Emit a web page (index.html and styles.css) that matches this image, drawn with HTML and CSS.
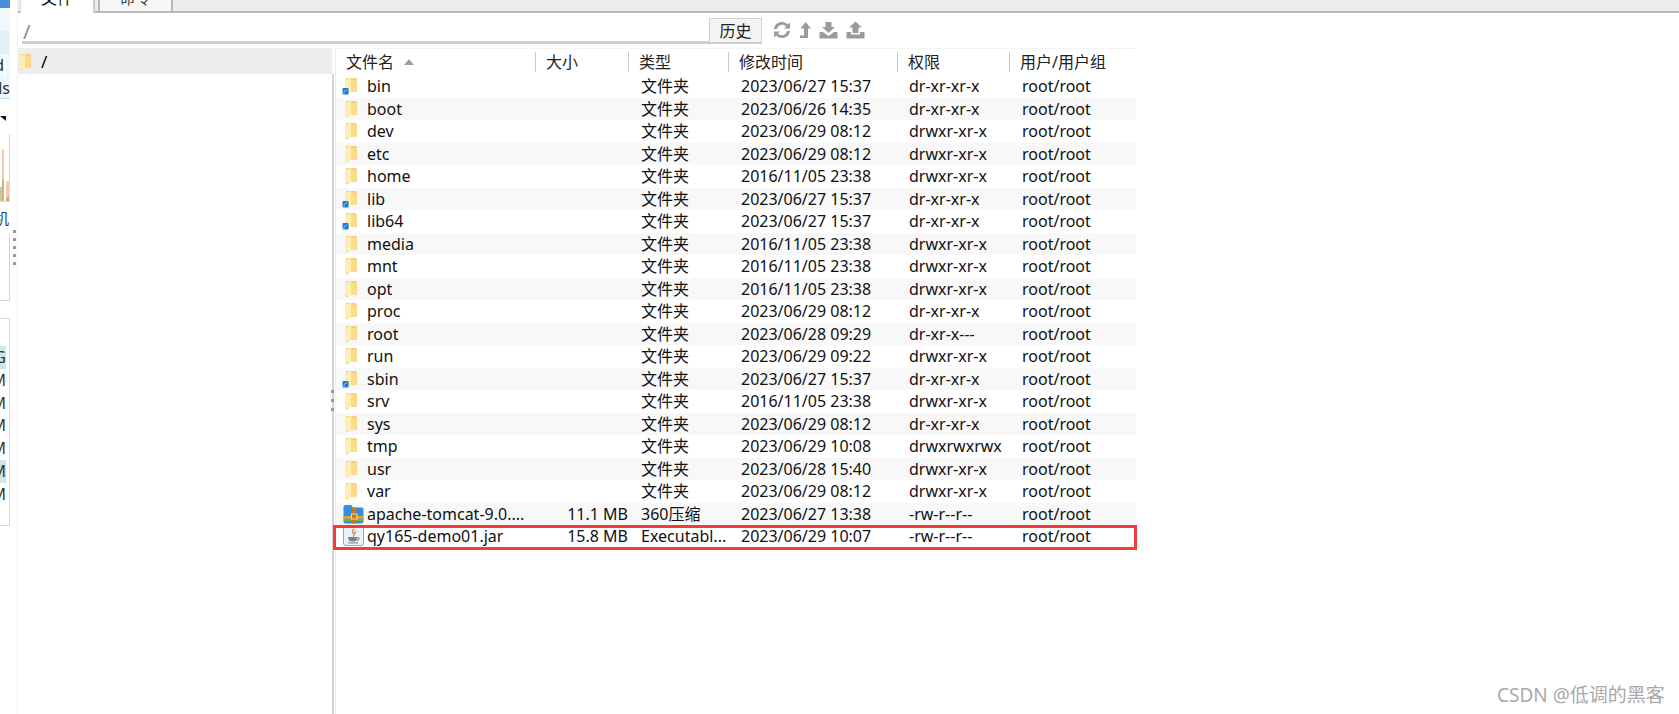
FILE: index.html
```html
<!DOCTYPE html>
<html lang="zh-CN">
<head>
    <meta charset="UTF-8">
    <title>文件</title>
    <link rel="stylesheet" href="styles.css">
</head>
<body>
    <svg class="defs" width="0" height="0">
        <symbol id="folder" viewBox="0 0 14 18">
            <path d="M2 1 L12 1 L13 2.5 L13 15 L5 15 L5 16.5 L2 17.5 Z" fill="#f6cf72"/>
            <path d="M1 3 L7 1 L7 15 L1 17 Z" fill="#ffeeb4"/>
            <path d="M7 3 L12.5 3 L12.5 15 L7 15 Z" fill="#fbdc8e"/>
        </symbol>
        <symbol id="link" viewBox="0 0 7 9">
            <rect x="0.5" y="2" width="6" height="6.5" rx="1" fill="#1b7ad0"/>
            <path d="M2 8 L2 5.5 L5 3.5" stroke="#8cc6f2" stroke-width="1" fill="none"/>
        </symbol>
    </svg>

    <div class="strip">
        <div class="strip-top"></div>
        <div class="strip-row tint1"></div>
        <div class="strip-row tint2"></div>
        <div class="strip-row tint1 txt-d"><span>d</span></div>
        <div class="strip-row tint3 last"><span>ls</span></div>
        <div class="strip-arrow"></div>
        <div class="strip-chart">
            <i class="bar b1"></i><i class="bar b2"></i><i class="bar b3"></i>
        </div>
        <div class="strip-char"><span>机</span></div>
        <div class="strip-chart2">
            <div class="grip"><i></i><i></i><i></i><i></i><i></i></div>
        </div>
        <div class="strip-list">
            <div class="mem hl"><span>G</span></div>
            <div class="mem"><span>M</span></div>
            <div class="mem"><span>M</span></div>
            <div class="mem"><span>M</span></div>
            <div class="mem"><span>M</span></div>
            <div class="mem hl"><span>M</span></div>
            <div class="mem"><span>M</span></div>
        </div>
    </div>

    <div class="main">
        <div class="tabs">
            <div class="tab active"><span>文件</span></div>
            <div class="tab other"><span>命令</span></div>
        </div>

        <div class="addr">
            <div class="addr-box">
                <div class="addr-input">/</div>
                <button class="history">历史</button>
            </div>
            <div class="tools">
                <svg width="18" height="18" viewBox="0 0 18 18" fill="#9b9b9b">
                    <path d="M1 8 C1.5 3.5 5 1 9 1 C11.5 1 13.5 2 14.8 3.5 L17 1.5 L17 7.5 L11 7.5 L13 5.5 C12 4.4 10.6 3.8 9 3.8 C6.6 3.8 4.6 5.5 4 8 Z"/>
                    <path d="M17 10 C16.5 14.5 13 17 9 17 C6.5 17 4.5 16 3.2 14.5 L1 16.5 L1 10.5 L7 10.5 L5 12.5 C6 13.6 7.4 14.2 9 14.2 C11.4 14.2 13.4 12.5 14 10 Z"/>
                </svg>
                <svg width="12" height="18" viewBox="0 0 12 18" fill="#9b9b9b">
                    <path d="M6.5 1 L12 7.5 L9 7.5 L9 17 L1 17 L1 14.5 L5 14.5 L5 7.5 L1.5 7.5 Z"/>
                </svg>
                <svg width="19" height="18" viewBox="0 0 19 18" fill="#9b9b9b">
                    <path d="M6.5 1 L12.5 1 L12.5 6 L16 6 L9.5 12 L3 6 L6.5 6 Z"/>
                    <path d="M0.5 11 L4 11 L9.5 15 L15 11 L18.5 11 L18.5 17.5 L0.5 17.5 Z"/>
                </svg>
                <svg width="19" height="18" viewBox="0 0 19 18" fill="#9b9b9b">
                    <path d="M9.5 0.5 L16 6.5 L12.5 6.5 L12.5 12 L6.5 12 L6.5 6.5 L3 6.5 Z"/>
                    <path d="M0.5 11 L5 11 L5 13.5 L14 13.5 L14 11 L18.5 11 L18.5 17.5 L0.5 17.5 Z"/>
                </svg>
            </div>
        </div>

        <div class="panes">
            <div class="tree">
                <div class="tree-row">
                    <svg class="ico" width="14" height="18"><use href="#folder"/></svg>
                    <span>/</span>
                </div>
                <div class="grip side"><i></i><i></i><i></i></div>
            </div>

            <div class="files">
                <div class="row head">
                    <div class="c name">文件名<i class="sort"></i></div>
                    <div class="c">大小</div>
                    <div class="c">类型</div>
                    <div class="c">修改时间</div>
                    <div class="c">权限</div>
                    <div class="c">用户/用户组</div>
                </div>

                <div class="row"><div class="c name"><span class="ficon"><svg width="14" height="18"><use href="#folder"/></svg><svg class="lnk" width="7" height="9"><use href="#link"/></svg></span>bin</div><div class="c size"></div><div class="c">文件夹</div><div class="c">2023/06/27 15:37</div><div class="c">dr-xr-xr-x</div><div class="c">root/root</div></div>
                <div class="row"><div class="c name"><span class="ficon"><svg width="14" height="18"><use href="#folder"/></svg></span>boot</div><div class="c size"></div><div class="c">文件夹</div><div class="c">2023/06/26 14:35</div><div class="c">dr-xr-xr-x</div><div class="c">root/root</div></div>
                <div class="row"><div class="c name"><span class="ficon"><svg width="14" height="18"><use href="#folder"/></svg></span>dev</div><div class="c size"></div><div class="c">文件夹</div><div class="c">2023/06/29 08:12</div><div class="c">drwxr-xr-x</div><div class="c">root/root</div></div>
                <div class="row"><div class="c name"><span class="ficon"><svg width="14" height="18"><use href="#folder"/></svg></span>etc</div><div class="c size"></div><div class="c">文件夹</div><div class="c">2023/06/29 08:12</div><div class="c">drwxr-xr-x</div><div class="c">root/root</div></div>
                <div class="row"><div class="c name"><span class="ficon"><svg width="14" height="18"><use href="#folder"/></svg></span>home</div><div class="c size"></div><div class="c">文件夹</div><div class="c">2016/11/05 23:38</div><div class="c">drwxr-xr-x</div><div class="c">root/root</div></div>
                <div class="row"><div class="c name"><span class="ficon"><svg width="14" height="18"><use href="#folder"/></svg><svg class="lnk" width="7" height="9"><use href="#link"/></svg></span>lib</div><div class="c size"></div><div class="c">文件夹</div><div class="c">2023/06/27 15:37</div><div class="c">dr-xr-xr-x</div><div class="c">root/root</div></div>
                <div class="row"><div class="c name"><span class="ficon"><svg width="14" height="18"><use href="#folder"/></svg><svg class="lnk" width="7" height="9"><use href="#link"/></svg></span>lib64</div><div class="c size"></div><div class="c">文件夹</div><div class="c">2023/06/27 15:37</div><div class="c">dr-xr-xr-x</div><div class="c">root/root</div></div>
                <div class="row"><div class="c name"><span class="ficon"><svg width="14" height="18"><use href="#folder"/></svg></span>media</div><div class="c size"></div><div class="c">文件夹</div><div class="c">2016/11/05 23:38</div><div class="c">drwxr-xr-x</div><div class="c">root/root</div></div>
                <div class="row"><div class="c name"><span class="ficon"><svg width="14" height="18"><use href="#folder"/></svg></span>mnt</div><div class="c size"></div><div class="c">文件夹</div><div class="c">2016/11/05 23:38</div><div class="c">drwxr-xr-x</div><div class="c">root/root</div></div>
                <div class="row"><div class="c name"><span class="ficon"><svg width="14" height="18"><use href="#folder"/></svg></span>opt</div><div class="c size"></div><div class="c">文件夹</div><div class="c">2016/11/05 23:38</div><div class="c">drwxr-xr-x</div><div class="c">root/root</div></div>
                <div class="row"><div class="c name"><span class="ficon"><svg width="14" height="18"><use href="#folder"/></svg></span>proc</div><div class="c size"></div><div class="c">文件夹</div><div class="c">2023/06/29 08:12</div><div class="c">dr-xr-xr-x</div><div class="c">root/root</div></div>
                <div class="row"><div class="c name"><span class="ficon"><svg width="14" height="18"><use href="#folder"/></svg></span>root</div><div class="c size"></div><div class="c">文件夹</div><div class="c">2023/06/28 09:29</div><div class="c">dr-xr-x---</div><div class="c">root/root</div></div>
                <div class="row"><div class="c name"><span class="ficon"><svg width="14" height="18"><use href="#folder"/></svg></span>run</div><div class="c size"></div><div class="c">文件夹</div><div class="c">2023/06/29 09:22</div><div class="c">drwxr-xr-x</div><div class="c">root/root</div></div>
                <div class="row"><div class="c name"><span class="ficon"><svg width="14" height="18"><use href="#folder"/></svg><svg class="lnk" width="7" height="9"><use href="#link"/></svg></span>sbin</div><div class="c size"></div><div class="c">文件夹</div><div class="c">2023/06/27 15:37</div><div class="c">dr-xr-xr-x</div><div class="c">root/root</div></div>
                <div class="row"><div class="c name"><span class="ficon"><svg width="14" height="18"><use href="#folder"/></svg></span>srv</div><div class="c size"></div><div class="c">文件夹</div><div class="c">2016/11/05 23:38</div><div class="c">drwxr-xr-x</div><div class="c">root/root</div></div>
                <div class="row"><div class="c name"><span class="ficon"><svg width="14" height="18"><use href="#folder"/></svg></span>sys</div><div class="c size"></div><div class="c">文件夹</div><div class="c">2023/06/29 08:12</div><div class="c">dr-xr-xr-x</div><div class="c">root/root</div></div>
                <div class="row"><div class="c name"><span class="ficon"><svg width="14" height="18"><use href="#folder"/></svg></span>tmp</div><div class="c size"></div><div class="c">文件夹</div><div class="c">2023/06/29 10:08</div><div class="c">drwxrwxrwx</div><div class="c">root/root</div></div>
                <div class="row"><div class="c name"><span class="ficon"><svg width="14" height="18"><use href="#folder"/></svg></span>usr</div><div class="c size"></div><div class="c">文件夹</div><div class="c">2023/06/28 15:40</div><div class="c">drwxr-xr-x</div><div class="c">root/root</div></div>
                <div class="row"><div class="c name"><span class="ficon"><svg width="14" height="18"><use href="#folder"/></svg></span>var</div><div class="c size"></div><div class="c">文件夹</div><div class="c">2023/06/29 08:12</div><div class="c">drwxr-xr-x</div><div class="c">root/root</div></div>
                <div class="row">
                    <div class="c name">
                        <span class="ficon wide">
                            <svg width="21" height="20" viewBox="0 0 21 20">
                                <path d="M0.5 3 Q0.5 1 2.5 1 L8 1 L10 3.5 L18.5 3.5 Q20.5 3.5 20.5 5.5 L20.5 17 Q20.5 19.5 18 19.5 L3 19.5 Q0.5 19.5 0.5 17 Z" fill="#2f8fe0"/>
                                <rect x="0.5" y="14.5" width="20" height="2.5" fill="#7ab54a"/>
                                <rect x="0.5" y="12" width="20" height="2.5" fill="#f0a030"/>
                                <rect x="9" y="3.5" width="4.5" height="16" fill="#c67a22"/>
                                <rect x="8.5" y="10" width="5.5" height="5" fill="none" stroke="#f3d9a0" stroke-width="1"/>
                            </svg>
                        </span>apache-tomcat-9.0....
                    </div>
                    <div class="c size">11.1 MB</div><div class="c">360压缩</div><div class="c">2023/06/27 13:38</div><div class="c">-rw-r--r--</div><div class="c">root/root</div>
                </div>
                <div class="row">
                    <div class="c name">
                        <span class="ficon wide">
                            <svg width="21" height="20" viewBox="0 0 21 20">
                                <rect x="0.5" y="0.5" width="20" height="19" rx="2.5" fill="#eef1f5" stroke="#9aa3ad"/>
                                <path d="M11 3 Q8 5.5 10.5 7.5 Q12 9 10 10.5 M13 5 Q11 6.5 12.5 8" stroke="#d8843a" stroke-width="1.2" fill="none"/>
                                <path d="M5 11 L14.5 11 Q14.5 15.5 10 15.5 Q5 15.5 5 11 Z" fill="#6f7f94"/>
                                <path d="M14.5 11.5 Q17 11.5 16 13.5 L14 14.5" stroke="#6f7f94" fill="none"/>
                                <rect x="5" y="16.2" width="10" height="1.3" fill="#8b97a8"/>
                            </svg>
                        </span>qy165-demo01.jar
                    </div>
                    <div class="c size">15.8 MB</div><div class="c">Executabl...</div><div class="c">2023/06/29 10:07</div><div class="c">-rw-r--r--</div><div class="c">root/root</div>
                </div>
                <div class="mark"></div>
            </div>
        </div>
    </div>

    <div class="watermark">CSDN @低调的黑客</div>
</body>
</html>
```

FILE: styles.css
```css
* {
    box-sizing: border-box;
}
html, body {
    height: 100%;
}
body {
    margin: 0;
    display: flex;
    height: 714px;
    overflow: hidden;
    background-color: #fff;
    color: #111;
    font-family: "Noto Sans", "Noto Sans CJK SC", sans-serif;
    font-size: 16px;
}
.defs {
    position: absolute;
}

/* --- 左边被裁掉的窗口 --- */
.strip {
    width: 18px;
    flex-shrink: 0;
    border-right: 1px solid #f1f1f1;
    overflow: hidden;
    color: #333;
}
.strip-top {
    width: 10px;
    height: 8px;
    background-color: #4a8fd8;
}
.strip-row {
    width: 10px;
    height: 23px;
    text-align: right;
    line-height: 22px;
    font-size: 16px;
    overflow: hidden;
    display: flex;
    justify-content: flex-end;
}
.strip-row.txt-d {
    width: 4px;
    box-shadow: 6px 0 0 #eef9fd;
}
.strip-row.last {
    height: 22px;
    border-bottom: 1px solid #c8dcea;
}
.tint1 { background-color: #eef9fd; }
.tint2 { background-color: #e3f2f8; }
.tint3 { background-color: #eaf6fb; }
.strip-arrow {
    width: 0;
    height: 0;
    margin-top: 17px;
    border-top: 5px solid #111;
    border-left: 6px solid transparent;
}
.strip-chart {
    width: 10px;
    height: 68px;
    margin-top: 13px;
    border-right: 1px solid #ccdbe0;
    border-bottom: 1px solid #ccdbe0;
    display: flex;
    align-items: flex-end;
}
.bar {
    display: block;
    background-color: #f8c9ae;
}
.b1 { width: 2px; height: 14px; background-color: #d9c3a0; }
.b2 { width: 3px; height: 52px; background: linear-gradient(#f8c9ae 60%, #c4b488 60%); }
.b3 { width: 3px; height: 20px; background: linear-gradient(#f8c9ae 80%, #c4b488 80%); margin-left: 2px; }
.strip-char {
    width: 9px;
    height: 32px;
    padding-top: 8px;
    line-height: 16px;
    font-size: 15px;
    overflow: hidden;
    display: flex;
    justify-content: flex-end;
    color: #2a3f66;
}
.strip-char span {
    flex-shrink: 0;
}
.strip-chart2 {
    position: relative;
    width: 10px;
    height: 67px;
    border-right: 1px solid #ccdbe0;
    border-bottom: 1px solid #ccdbe0;
}
.grip {
    position: absolute;
    left: 13px;
    top: -4px;
    display: flex;
    flex-direction: column;
    gap: 5px;
}
.grip i {
    display: block;
    width: 3px;
    height: 3px;
    background-color: #999;
}
.grip.side {
    left: 313px;
    top: 342px;
    gap: 6px;
}
.strip-list {
    width: 10px;
    height: 208px;
    margin-top: 17px;
    padding-top: 27px;
    border: solid #d8d8d8;
    border-width: 1px 1px 1px 0;
}
.mem {
    width: 6px;
    height: 22.8px;
    line-height: 22px;
    font-size: 16px;
    overflow: hidden;
    display: flex;
    justify-content: flex-end;
}
.mem span {
    flex-shrink: 0;
}
.mem.hl {
    background-color: #cfe6e2;
}

/* --- 主窗口 --- */
.main {
    flex: 1;
    display: flex;
    flex-direction: column;
    min-width: 0;
}
.tabs {
    height: 13px;
    padding-left: 2px;
    display: flex;
    background-color: #ececec;
    border-bottom: 2px solid #b8b8b8;
}
.tab {
    height: 13px;
    text-align: center;
    overflow: hidden;
    line-height: 16px;
}
.tab span {
    display: block;
    margin-top: -10px;
}
.tab.active {
    width: 75px;
    background-color: #fff;
    border-left: 1px solid #ddd;
    border-right: 2px solid #ccc;
}
.tab.other {
    width: 75px;
    margin-left: 3px;
    background-color: #f7f7f7;
    border: 2px solid #b8b8b8;
    border-top: none;
    color: #444;
}
.addr {
    height: 32px;
    padding-left: 4px;
    display: flex;
    align-items: flex-start;
}
.addr-box {
    width: 740px;
    height: 31px;
    display: flex;
    justify-content: space-between;
    align-items: flex-end;
    border-bottom: 3px solid #cdcdcd;
}
.addr-input {
    margin-bottom: -4px;
    padding-left: 1px;
    font-size: 20px;
    line-height: 26px;
    color: #8a8a8a;
}
.history {
    width: 53px;
    height: 24px;
    margin-bottom: -1px;
    padding: 0;
    background-color: #f4f4f4;
    border: 1px solid #d2d2d2;
    border-bottom-width: 0;
    font: inherit;
    line-height: 22px;
    color: #222;
}
.tools {
    margin-left: 11px;
    padding-top: 8px;
    display: flex;
    gap: 8px;
}
.panes {
    flex: 1;
    margin-top: 3px;
    display: flex;
}
.tree {
    position: relative;
    width: 317px;
    flex-shrink: 0;
}
.tree-row {
    width: 314px;
    height: 26px;
    padding-top: 1px;
    display: flex;
    align-items: center;
    gap: 9px;
    background-color: #eee;
    font-size: 17px;
    color: #000;
}
.tree::after {
    content: "";
    display: block;
    width: 314px;
    height: 640px;
    border-right: 2px solid #d4d4d4;
}
.ico {
    flex-shrink: 0;
}

/* --- 文件列表 --- */
.files {
    position: relative;
    width: 801px;
    flex-shrink: 0;
    border-left: 1px solid #f0f0f0;
}
.row {
    display: grid;
    grid-template-columns: 200px 93px 100px 169px 112px 126px;
    height: 22.5px;
    line-height: 22px;
    align-items: center;
}
.row:nth-child(odd) {
    background-color: #f8f8f8;
}
.row .c {
    padding-left: 12px;
    white-space: nowrap;
    overflow: hidden;
}
.row .c:nth-child(5) {
    padding-left: 11px;
}
.row .c.name {
    display: flex;
    align-items: center;
    padding-left: 8px;
}
.row .c.size {
    padding-left: 0;
    padding-right: 1px;
    text-align: right;
}
.row.head {
    height: 27px;
    background-color: #fff;
    border-top: 1px solid #f4f4f4;
    color: #222;
}
.row.head .c {
    height: 20px;
    line-height: 20px;
    padding-left: 10px;
    border-right: 1px solid #c8c8c8;
}
.row.head .c:last-child {
    border-right: none;
}
.row.head .c.name {
    padding-left: 10px;
}
.sort {
    margin-left: 10px;
    border-left: 5px solid transparent;
    border-right: 5px solid transparent;
    border-bottom: 6px solid #a0a0a0;
}
.ficon {
    position: relative;
    flex-shrink: 0;
    width: 23px;
    height: 18px;
    display: block;
}
.ficon.wide {
    width: 24px;
    height: 20px;
    margin-left: -1px;
}
.lnk {
    position: absolute;
    left: -2px;
    bottom: 0;
}
.mark {
    position: absolute;
    left: -3px;
    right: -1px;
    top: 477px;
    height: 25px;
    border: 3px solid #f03c3c;
}
.watermark {
    position: absolute;
    left: 1497px;
    top: 684px;
    font-size: 19px;
    line-height: 22px;
    color: #a9a9a9;
}
```
